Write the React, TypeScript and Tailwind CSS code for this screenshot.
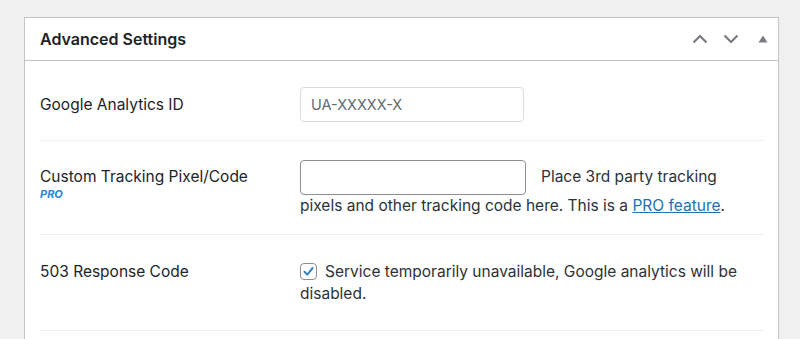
import React from 'react';

function ChevronUp() {
  return (
    <svg width="16" height="10" viewBox="0 0 16 10" fill="none">
      <path d="M1.5 8.5 L8 2 L14.5 8.5" stroke="#787c82" strokeWidth="2.2" />
    </svg>
  );
}

function ChevronDown() {
  return (
    <svg width="16" height="10" viewBox="0 0 16 10" fill="none">
      <path d="M1.5 1.5 L8 8 L14.5 1.5" stroke="#787c82" strokeWidth="2.2" />
    </svg>
  );
}

function TriangleUp() {
  return (
    <svg width="10" height="8" viewBox="0 0 10 8">
      <path d="M5 0.5 L9.5 7.5 L0.5 7.5 Z" fill="#787c82" />
    </svg>
  );
}

export default function App() {
  return (
    <div
      className="min-h-screen bg-[#f0f0f1] pt-[17px] pl-[24px] text-[#1d2327] text-[15.5px]"
      style={{ fontFamily: 'Inter, "Noto Sans", sans-serif' }}
    >
      <div className="w-[755px] bg-white border-x border-t border-[#c3c4c7] pb-[9px]">
        {/* Header */}
        <div className="h-[43px] border-b border-[#c3c4c7] pl-[15px] pr-[10px] flex items-center justify-between">
          <h2 className="text-[16px] font-semibold text-[#1d2327]">Advanced Settings</h2>
          <div className="flex items-center">
            <span className="w-[16px] flex justify-center mr-[15px]">
              <ChevronUp />
            </span>
            <span className="w-[16px] flex justify-center mr-[19px]">
              <ChevronDown />
            </span>
            <span className="flex justify-center">
              <TriangleUp />
            </span>
          </div>
        </div>

        {/* Body */}
        <div className="ml-[15px] mr-[14px]">
          {/* Row 1 */}
          <div className="flex pt-[26px] pb-[18px] border-b border-[#f0f0f1]">
            <div className="w-[260px] shrink-0 flex items-center h-[35px]">Google Analytics ID</div>
            <input
              type="text"
              placeholder="UA-XXXXX-X"
              className="w-[224px] h-[35px] px-[10px] border border-[#dcdcde] rounded-[4px] text-[14.5px] placeholder:text-[#646970] outline-none"
            />
          </div>

          {/* Row 2 */}
          <div className="flex pt-[19px] pb-[17px] border-b border-[#f0f0f1]">
            <div className="w-[260px] shrink-0 pt-[7px]">
              <div className="leading-[20px]">Custom Tracking Pixel/Code</div>
              <div className="text-[11px] font-bold italic text-[#2a86d6] leading-[14px]">PRO</div>
            </div>
            <div className="flex-1 pr-[10px] leading-[22px] text-[#2c3338]">
              <input
                type="text"
                className="inline-block align-middle w-[226px] h-[35px] border border-[#8c8f94] rounded-[4px] outline-none"
              />
              <span className="ml-[15px]">
                Place 3rd party tracking pixels and other tracking code here. This is a{' '}
                <a href="#" className="text-[#2271b1] underline">PRO feature</a>.
              </span>
            </div>
          </div>

          {/* Row 3 */}
          <div className="flex pt-[26px] pb-[25px] border-b border-[#f0f0f1]">
            <div className="w-[260px] shrink-0 leading-[22px]">503 Response Code</div>
            <div className="flex-1 pr-[10px] leading-[22px] text-[#2c3338]">
              <span className="inline-flex align-middle items-center justify-center w-[17px] h-[17px] border border-[#8c8f94] rounded-[4px] mr-[8px] -mt-[3px]">
                <svg width="13" height="13" viewBox="0 0 13 13" fill="none">
                  <path d="M2.5 6.8 L5.3 9.6 L10.6 3" stroke="#3582c4" strokeWidth="2" strokeLinecap="round" strokeLinejoin="round" />
                </svg>
              </span>
              Service temporarily unavailable, Google analytics will be disabled.
            </div>
          </div>
        </div>
      </div>
    </div>
  );
}
